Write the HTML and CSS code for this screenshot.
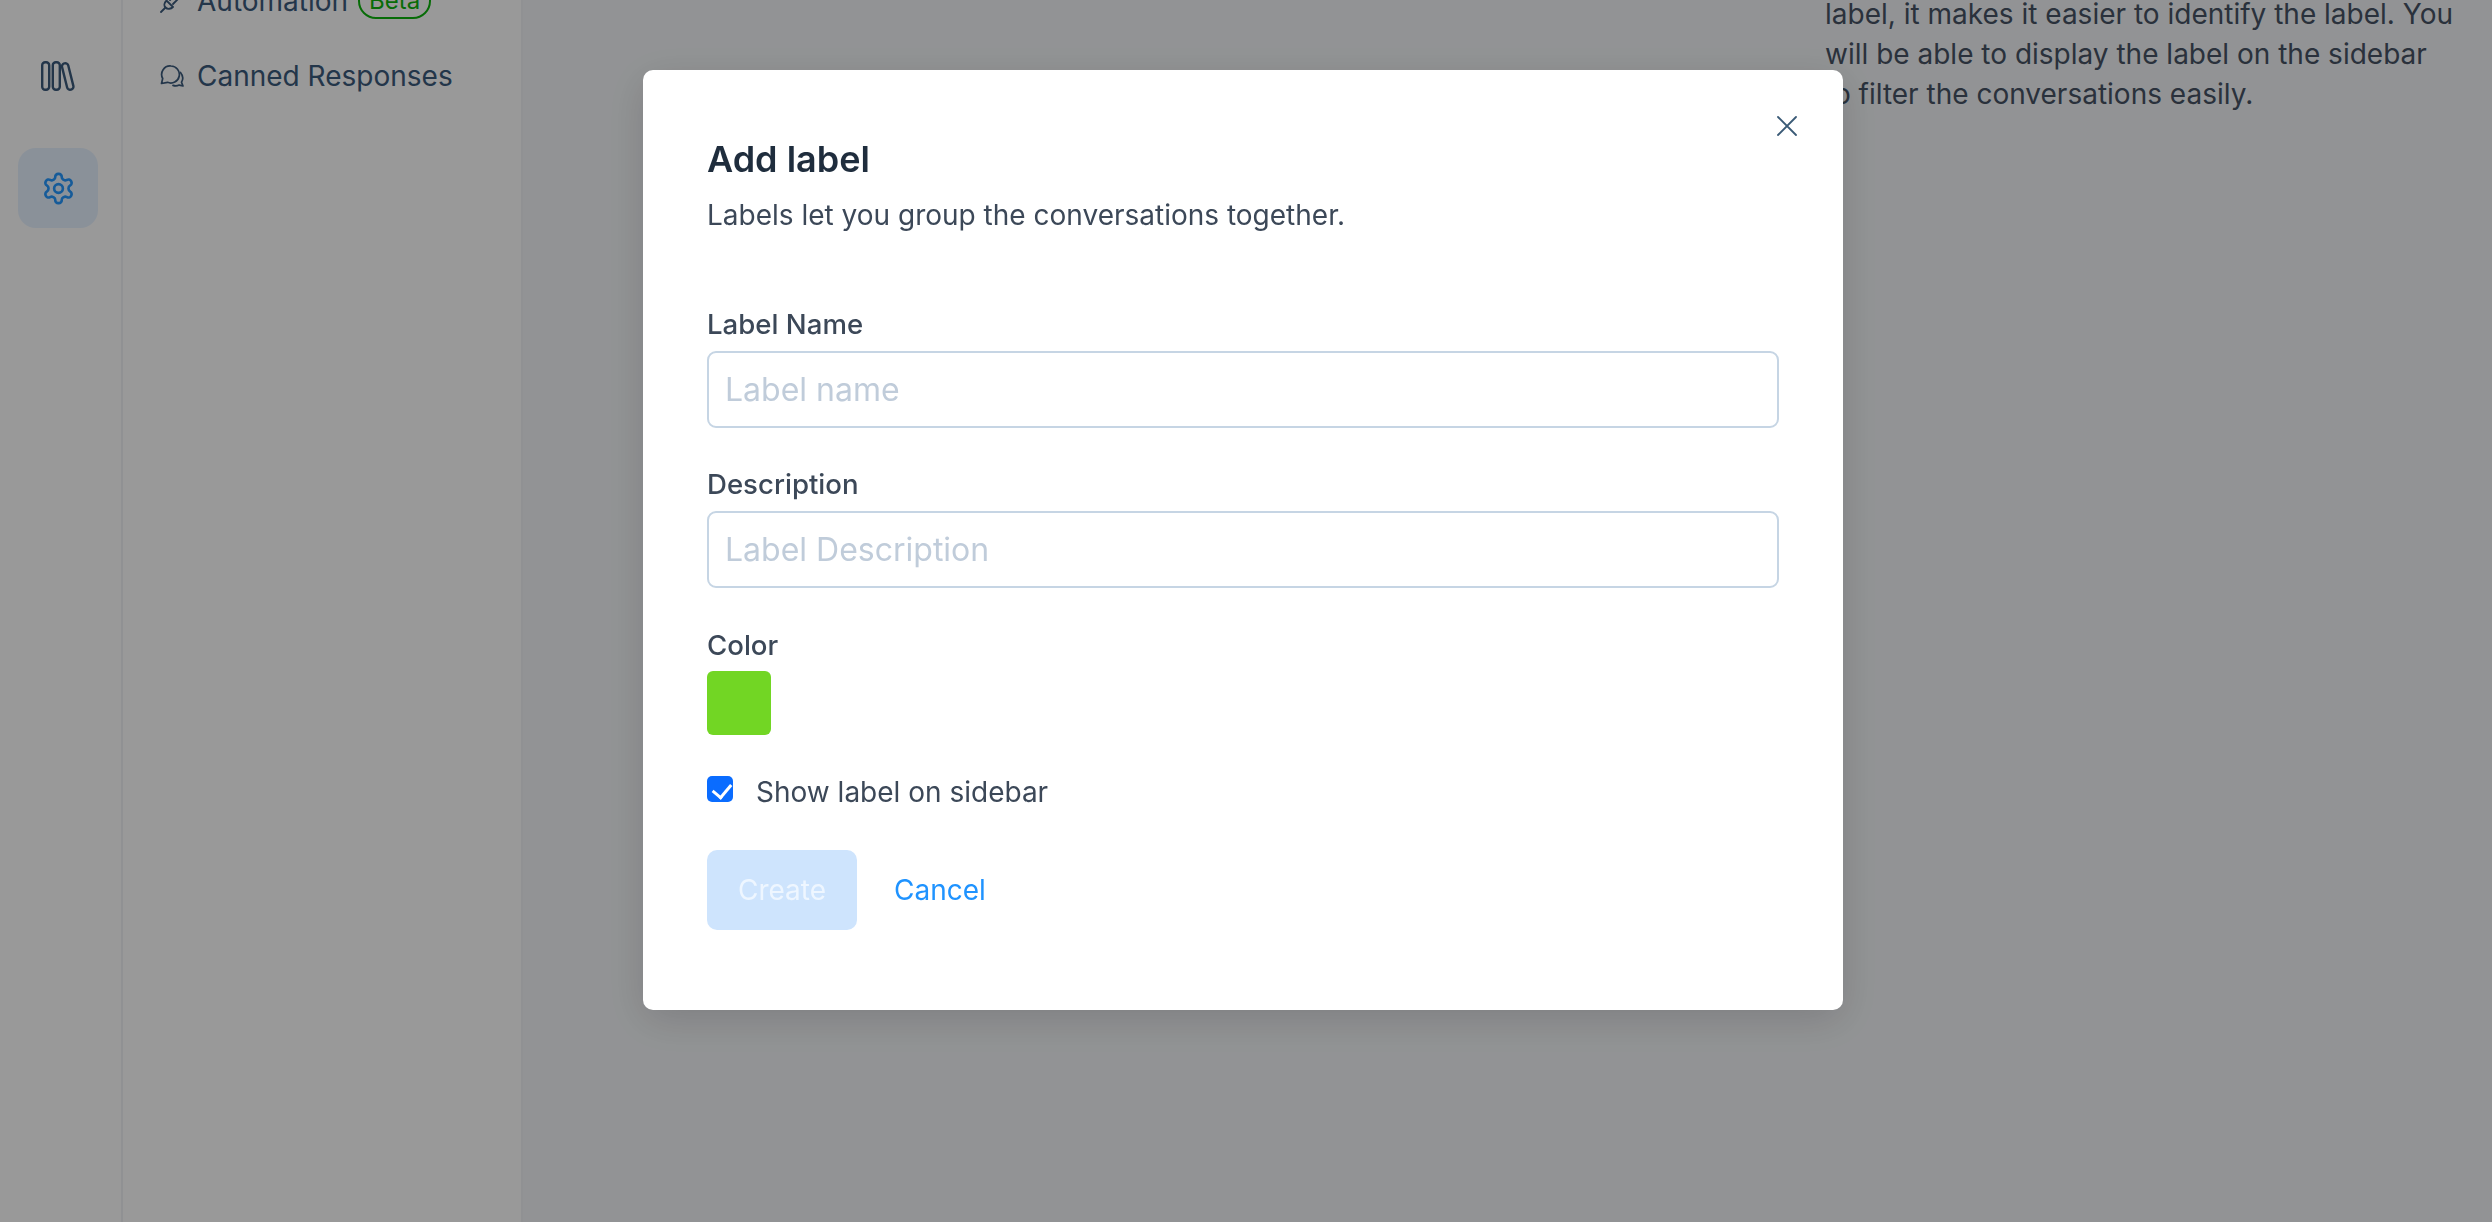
FILE: index.html
```html
<!DOCTYPE html>
<html lang="en">
<head>
  <meta charset="UTF-8">
  <meta name="viewport" content="width=device-width, initial-scale=1.0">
  <title>Add label</title>
  <link rel="stylesheet" href="styles.css">
</head>
<body>
  <div class="page">
    <nav class="rail">
      <a class="rail-item">
        <svg width="34" height="30" viewBox="0 0 34 30" fill="none" stroke="currentColor" stroke-width="2.400">
          <rect x="1.200" y="1.200" width="7" height="27.600" rx="3"/>
          <rect x="11.800" y="1.200" width="7" height="27.600" rx="3"/>
          <rect x="23.500" y="2" width="6.400" height="27" rx="3" transform="rotate(-14 26.700 15.500)"/>
        </svg>
      </a>
      <a class="rail-item active">
        <svg width="35" height="35" viewBox="0 0 24 24" fill="none" stroke="currentColor" stroke-width="1.800" stroke-linejoin="round">
          <path d="M12.220 2h-.44a2 2 0 0 0-2 2v.18a2 2 0 0 1-1 1.730l-.43.25a2 2 0 0 1-2 0l-.15-.08a2 2 0 0 0-2.730.73l-.22.38a2 2 0 0 0 .73 2.730l.15.1a2 2 0 0 1 1 1.720v.51a2 2 0 0 1-1 1.740l-.15.09a2 2 0 0 0-.73 2.730l.22.38a2 2 0 0 0 2.730.73l.15-.08a2 2 0 0 1 2 0l.43.25a2 2 0 0 1 1 1.730V20a2 2 0 0 0 2 2h.44a2 2 0 0 0 2-2v-.18a2 2 0 0 1 1-1.730l.43-.25a2 2 0 0 1 2 0l.15.08a2 2 0 0 0 2.730-.73l.22-.39a2 2 0 0 0-.73-2.730l-.15-.08a2 2 0 0 1-1-1.740v-.5a2 2 0 0 1 1-1.740l.15-.09a2 2 0 0 0 .73-2.730l-.22-.38a2 2 0 0 0-2.730-.73l-.15.08a2 2 0 0 1-2 0l-.43-.25a2 2 0 0 1-1-1.730V4a2 2 0 0 0-2-2z"/>
          <circle cx="12" cy="12" r="3"/>
        </svg>
      </a>
    </nav>

    <aside class="subnav">
      <a class="subnav-item">
        <svg width="24" height="24" viewBox="0 0 24 24" fill="none" stroke="currentColor" stroke-width="1.800" stroke-linecap="round" stroke-linejoin="round">
          <path d="M1 23l4.500-4.500"/>
          <path d="M6.500 11.500l6.500 6.500c-2 2-5.500 2.500-7.500.5s-1-5 1-7z"/>
          <path d="M10 11l5-5M13 15l5-5"/>
        </svg>
        <span>Automation</span>
        <span class="badge">Beta</span>
      </a>
      <a class="subnav-item">
        <svg width="24" height="22" viewBox="0 0 24 22" fill="none" stroke="currentColor" stroke-width="1.700" stroke-linejoin="round" stroke-linecap="round">
          <path d="M11 1a8.500 8.500 0 1 1-3.500 16.300L1.500 18.500l1.200-5A8.500 8.500 0 0 1 11 1z"/>
          <path d="M20.500 7.500c2.500 3 2.800 6.800 1 9.800l1.500 3.700-3.800-.9c-2 1-4.200 1.100-6.200.3"/>
        </svg>
        <span>Canned Responses</span>
      </a>
    </aside>

    <main class="content">
      <p class="help-text">label, it makes it easier to identify the label. You will be able to display the label on the sidebar to filter the conversations easily.</p>
    </main>
  </div>

  <div class="overlay">
    <form class="modal">
      <button type="button" class="close" aria-label="Close">
        <svg width="20" height="20" viewBox="0 0 20 20" fill="none" stroke="currentColor" stroke-width="1.800" stroke-linecap="round">
          <path d="M1 1l18 18M19 1L1 19"/>
        </svg>
      </button>

      <h2 class="modal-title">Add label</h2>
      <p class="modal-desc">Labels let you group the conversations together.</p>

      <label class="field-label" for="name">Label Name</label>
      <input class="field" type="text" id="name" placeholder="Label name">

      <label class="field-label" for="desc">Description</label>
      <input class="field" type="text" id="desc" placeholder="Label Description">

      <label class="field-label swatch-label">Color</label>
      <div class="swatch"></div>

      <label class="check-row">
        <input type="checkbox" checked>
        <span>Show label on sidebar</span>
      </label>

      <div class="actions">
        <button type="button" class="btn-create">Create</button>
        <a class="btn-cancel">Cancel</a>
      </div>
    </form>
  </div>
</body>
</html>
```

FILE: styles.css
```css
* {
  box-sizing: border-box;
}
html, body {
  height: 100%;
}
body {
  margin: 0;
  font-family: Inter, 'Liberation Sans', sans-serif;
  overflow: hidden;
  background: #fff;
}

/* page under the dimmed overlay */
.page {
  display: flex;
  height: 100vh;
  overflow: hidden;
}
.rail {
  width: 123px;
  flex-shrink: 0;
  border-right: 2px solid #f0f2f5;
  background: #fff;
  display: flex;
  flex-direction: column;
  gap: 32px;
  padding: 36px 0 0 18px;
}
.rail-item {
  width: 80px;
  height: 80px;
  border-radius: 18px;
  display: flex;
  align-items: center;
  justify-content: center;
  color: #3b5a7c;
}
.rail-item.active {
  background: #e6f2ff;
  color: #2598ff;
}
.subnav {
  width: 400px;
  flex-shrink: 0;
  border-right: 2px solid #f0f2f5;
  background: #fff;
  padding-left: 37px;
  margin-top: -37px;
}
.subnav-item {
  display: flex;
  align-items: center;
  gap: 13px;
  height: 75px;
  font-size: 28px;
  color: #3b5a7c;
}
.subnav-item svg {
  flex-shrink: 0;
}
.badge {
  margin-left: -3px;
  border: 2px solid #0db40d;
  color: #0db40d;
  border-radius: 18px;
  font-size: 24px;
  line-height: 33px;
  padding: 0 9px;
}
.content {
  flex: 1;
  background: #f4f6f9;
  padding-left: 1302px;
}
.help-text {
  margin: -6px 0 0;
  width: 632px;
  font-size: 28px;
  line-height: 40px;
  color: #465364;
}

/* modal */
.overlay {
  position: fixed;
  inset: 0;
  background: rgba(0, 0, 0, 0.4);
  display: flex;
  justify-content: center;
  align-items: flex-start;
  padding: 70px 6px 0 0;
}
.modal {
  position: relative;
  width: 1200px;
  height: 940px;
  background: #fff;
  border-radius: 10px;
  padding: 64px;
  box-shadow: 0 10px 40px rgba(0, 0, 0, 0.15);
}
.close {
  position: absolute;
  top: 46px;
  right: 46px;
  padding: 0;
  border: none;
  background: none;
  color: #3a5a76;
  display: flex;
}
.modal-title {
  margin: 0;
  font-size: 36px;
  line-height: 50px;
  font-weight: 600;
  color: #1f2d3d;
}
.modal-desc {
  margin: 6px 0 0;
  font-size: 28px;
  line-height: 50px;
  color: #3c4858;
}
.field-label {
  display: block;
  font-size: 27.6px;
  font-weight: 500;
  line-height: 40px;
  color: #3c4858;
}
.modal-desc + .field-label {
  margin-top: 64px;
}
.field {
  display: block;
  width: 100%;
  height: 77px;
  margin: 7px 0 0;
  padding: 0 16px;
  border: 2px solid #c6d5e4;
  border-radius: 9px;
  font-family: inherit;
  font-size: 32px;
  color: #3c4858;
  outline: none;
}
.field::placeholder {
  color: #c0ccda;
}
.field + .field-label {
  margin-top: 36px;
}
.field + .swatch-label {
  margin-top: 37px;
}
.swatch {
  width: 64px;
  height: 64px;
  margin-top: 6px;
  border-radius: 6px;
  background: #72d624;
}
.check-row {
  display: flex;
  align-items: flex-start;
  gap: 23px;
  margin-top: 37px;
  font-size: 28px;
  line-height: 40px;
  color: #3c4858;
}
.check-row input {
  appearance: none;
  position: relative;
  width: 26px;
  height: 26px;
  margin: 4px 0 0;
  border-radius: 5px;
  background: #0a6cff;
}
.check-row input::before {
  content: "";
  position: absolute;
  left: 9px;
  top: 4px;
  width: 9px;
  height: 15px;
  border: solid #fff;
  border-width: 0 3.5px 3.5px 0;
  transform: rotate(40deg);
}
.actions {
  display: flex;
  align-items: center;
  gap: 37px;
  margin-top: 38px;
}
.btn-create {
  width: 150px;
  height: 80px;
  padding: 0;
  border: none;
  border-radius: 10px;
  background: #cee4fd;
  color: #eef6ff;
  font-family: inherit;
  font-size: 28px;
}
.btn-cancel {
  font-size: 28px;
  color: #1f93ff;
}
```
